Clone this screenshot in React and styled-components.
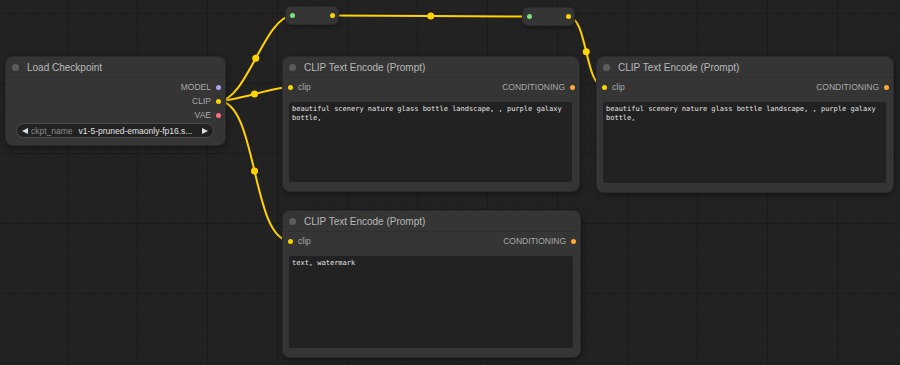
import React from "react";
import styled, { createGlobalStyle } from "styled-components";

const GlobalStyle = createGlobalStyle`
  html, body {
    margin: 0;
    padding: 0;
    background: #222222;
    overflow: hidden;
  }
`;

const Canvas = styled.div`
  position: relative;
  width: 900px;
  height: 365px;
  overflow: hidden;
  font-family: "Liberation Sans", Arial, sans-serif;
  background-color: #222222;
  background-image:
    linear-gradient(to right, #1b1b1b 1px, transparent 1px),
    linear-gradient(to bottom, #1b1b1b 1px, transparent 1px),
    linear-gradient(to right, #202020 1px, transparent 1px),
    linear-gradient(to bottom, #202020 1px, transparent 1px);
  background-size: 70px 70px, 70px 70px, 14px 14px, 14px 14px;
  background-position: 67px 13px, 67px 13px, 11px 13px, 11px 13px;
`;

const Wires = styled.svg`
  position: absolute;
  left: 0;
  top: 0;
  width: 900px;
  height: 365px;
  pointer-events: none;
`;

// nodes sit on a free canvas, their coordinates are the content
const Node = styled.div`
  position: absolute;
  left: ${(p) => p.$x}px;
  top: ${(p) => p.$y}px;
  width: ${(p) => p.$w}px;
  height: ${(p) => p.$h}px;
  box-sizing: border-box;
  display: flex;
  flex-direction: column;
  background: #353535;
  border-radius: 7px;
  box-shadow: 0 0 0 1px #2b2b2b, 1px 2px 6px rgba(0, 0, 0, 0.5);
`;

const NodeTitle = styled.div`
  height: 21px;
  box-sizing: border-box;
  display: flex;
  align-items: center;
  gap: 8px;
  padding-left: 6px;
  border-bottom: 1px solid #2e2e2e;
  color: #b8b8b8;
  font-size: 10px;
  white-space: nowrap;
`;

const TitleDot = styled.span`
  width: 7px;
  height: 7px;
  border-radius: 50%;
  background: #5c5c5c;
  flex: none;
`;

const Body = styled.div`
  flex: 1;
  display: flex;
  flex-direction: column;
  padding-top: 2px;
  min-height: 0;
`;

const SlotRow = styled.div`
  height: 14px;
  display: flex;
  align-items: center;
  justify-content: ${(p) => (p.$outputsOnly ? "flex-end" : "space-between")};
  padding: 0 4px 0 5px;
  flex: none;
`;

const Slot = styled.div`
  display: flex;
  align-items: center;
  gap: 5px;
`;

const SlotLabel = styled.span`
  color: #a8a8a8;
  font-size: 8.5px;
  line-height: 1;
`;

const Dot = styled.span`
  width: 5px;
  height: 5px;
  border-radius: 50%;
  background: ${(p) => p.$c};
  flex: none;
`;

const Combo = styled.div`
  height: 15px;
  box-sizing: border-box;
  margin: 1px 11px 0 10px;
  display: flex;
  align-items: center;
  padding: 0 5px 0 5px;
  background: #222222;
  border: 1px solid #4a4a4a;
  border-radius: 8px;
  font-size: 8.5px;
  white-space: nowrap;
`;

const Arrow = styled.span`
  width: 0;
  height: 0;
  border-top: 3.5px solid transparent;
  border-bottom: 3.5px solid transparent;
  ${(p) =>
    p.$dir === "left"
      ? "border-right: 6px solid #dcdcdc;"
      : "border-left: 6px solid #dcdcdc;"}
  flex: none;
`;

const ComboLabel = styled.span`
  color: #8c8c8c;
  margin-left: 3px;
`;

const ComboValue = styled.span`
  color: #e2e2e2;
  margin-left: 6px;
  flex: 1;
`;

const TextBox = styled.div`
  flex: 1;
  margin: 8px 7px 9px 6px;
  padding: 3px 3px;
  background: #222222;
  border-radius: 2px;
  color: #e4e4e4;
  font-family: "DejaVu Sans Mono", "Liberation Mono", monospace;
  font-size: 7px;
  line-height: 9px;
  white-space: pre-wrap;
  word-break: normal;
  overflow: hidden;
`;

const Reroute = styled.div`
  position: absolute;
  left: ${(p) => p.$x}px;
  top: ${(p) => p.$y}px;
  width: ${(p) => p.$w}px;
  height: 17px;
  box-sizing: border-box;
  display: flex;
  align-items: center;
  justify-content: space-between;
  padding: 0 3.5px 0 4px;
  background: #353535;
  border-radius: 5px;
  box-shadow: 0 0 0 1px #2b2b2b, 1px 2px 5px rgba(0, 0, 0, 0.45);
`;

const YELLOW = "#ffd200";
const GREEN = "#7ee07a";
const ORANGE = "#ffa834";

const PROMPT = "beautiful scenery nature glass bottle landscape, , purple galaxy bottle,";

const links = [
  [[218.5, 101], [293, 15.5]],
  [[218.5, 101], [290.5, 87]],
  [[218.5, 101], [290.5, 241]],
  [[332, 15.5], [529.5, 16.5]],
  [[568, 16.5], [604.5, 87]],
];

function bezier(a, b) {
  const d = Math.hypot(b[0] - a[0], b[1] - a[1]) * 0.25;
  const c1 = [a[0] + d, a[1]];
  const c2 = [b[0] - d, b[1]];
  const mid = [
    0.125 * a[0] + 0.375 * c1[0] + 0.375 * c2[0] + 0.125 * b[0],
    0.125 * a[1] + 0.375 * c1[1] + 0.375 * c2[1] + 0.125 * b[1],
  ];
  return {
    d: `M${a[0]} ${a[1]} C${c1[0]} ${c1[1]} ${c2[0]} ${c2[1]} ${b[0]} ${b[1]}`,
    mid,
  };
}

function ClipNode({ x, y, w, h, text }) {
  return (
    <Node $x={x} $y={y} $w={w} $h={h}>
      <NodeTitle>
        <TitleDot />
        CLIP Text Encode (Prompt)
      </NodeTitle>
      <Body>
        <SlotRow>
          <Slot>
            <Dot $c={YELLOW} />
            <SlotLabel>clip</SlotLabel>
          </Slot>
          <Slot>
            <SlotLabel>CONDITIONING</SlotLabel>
            <Dot $c={ORANGE} />
          </Slot>
        </SlotRow>
        <TextBox>{text}</TextBox>
      </Body>
    </Node>
  );
}

export default function App() {
  return (
    <Canvas>
      <GlobalStyle />
      <Wires viewBox="0 0 900 365">
        {links.map(([a, b], i) => {
          const { d, mid } = bezier(a, b);
          return (
            <g key={i}>
              <path d={d} fill="none" stroke={YELLOW} strokeWidth="2" />
              <circle cx={mid[0]} cy={mid[1]} r="3.5" fill={YELLOW} />
            </g>
          );
        })}
      </Wires>

      <Node $x={6} $y={57} $w={219} $h={88}>
        <NodeTitle>
          <TitleDot />
          Load Checkpoint
        </NodeTitle>
        <Body>
          <SlotRow $outputsOnly>
            <Slot>
              <SlotLabel>MODEL</SlotLabel>
              <Dot $c="#aea2ee" />
            </Slot>
          </SlotRow>
          <SlotRow $outputsOnly>
            <Slot>
              <SlotLabel>CLIP</SlotLabel>
              <Dot $c={YELLOW} />
            </Slot>
          </SlotRow>
          <SlotRow $outputsOnly>
            <Slot>
              <SlotLabel>VAE</SlotLabel>
              <Dot $c="#ff6e7a" />
            </Slot>
          </SlotRow>
          <Combo>
            <Arrow $dir="left" />
            <ComboLabel>ckpt_name</ComboLabel>
            <ComboValue>v1-5-pruned-emaonly-fp16.s...</ComboValue>
            <Arrow $dir="right" />
          </Combo>
        </Body>
      </Node>

      <Reroute $x={286} $y={7} $w={52}>
        <Dot $c={GREEN} />
        <Dot $c={YELLOW} />
      </Reroute>
      <Reroute $x={523} $y={8} $w={51}>
        <Dot $c={GREEN} />
        <Dot $c={YELLOW} />
      </Reroute>

      <ClipNode x={283} y={57} w={296} h={134} text={PROMPT} />
      <ClipNode x={283} y={211} w={297} h={146} text="text, watermark" />
      <ClipNode x={597} y={57} w={296} h={135} text={PROMPT} />
    </Canvas>
  );
}
